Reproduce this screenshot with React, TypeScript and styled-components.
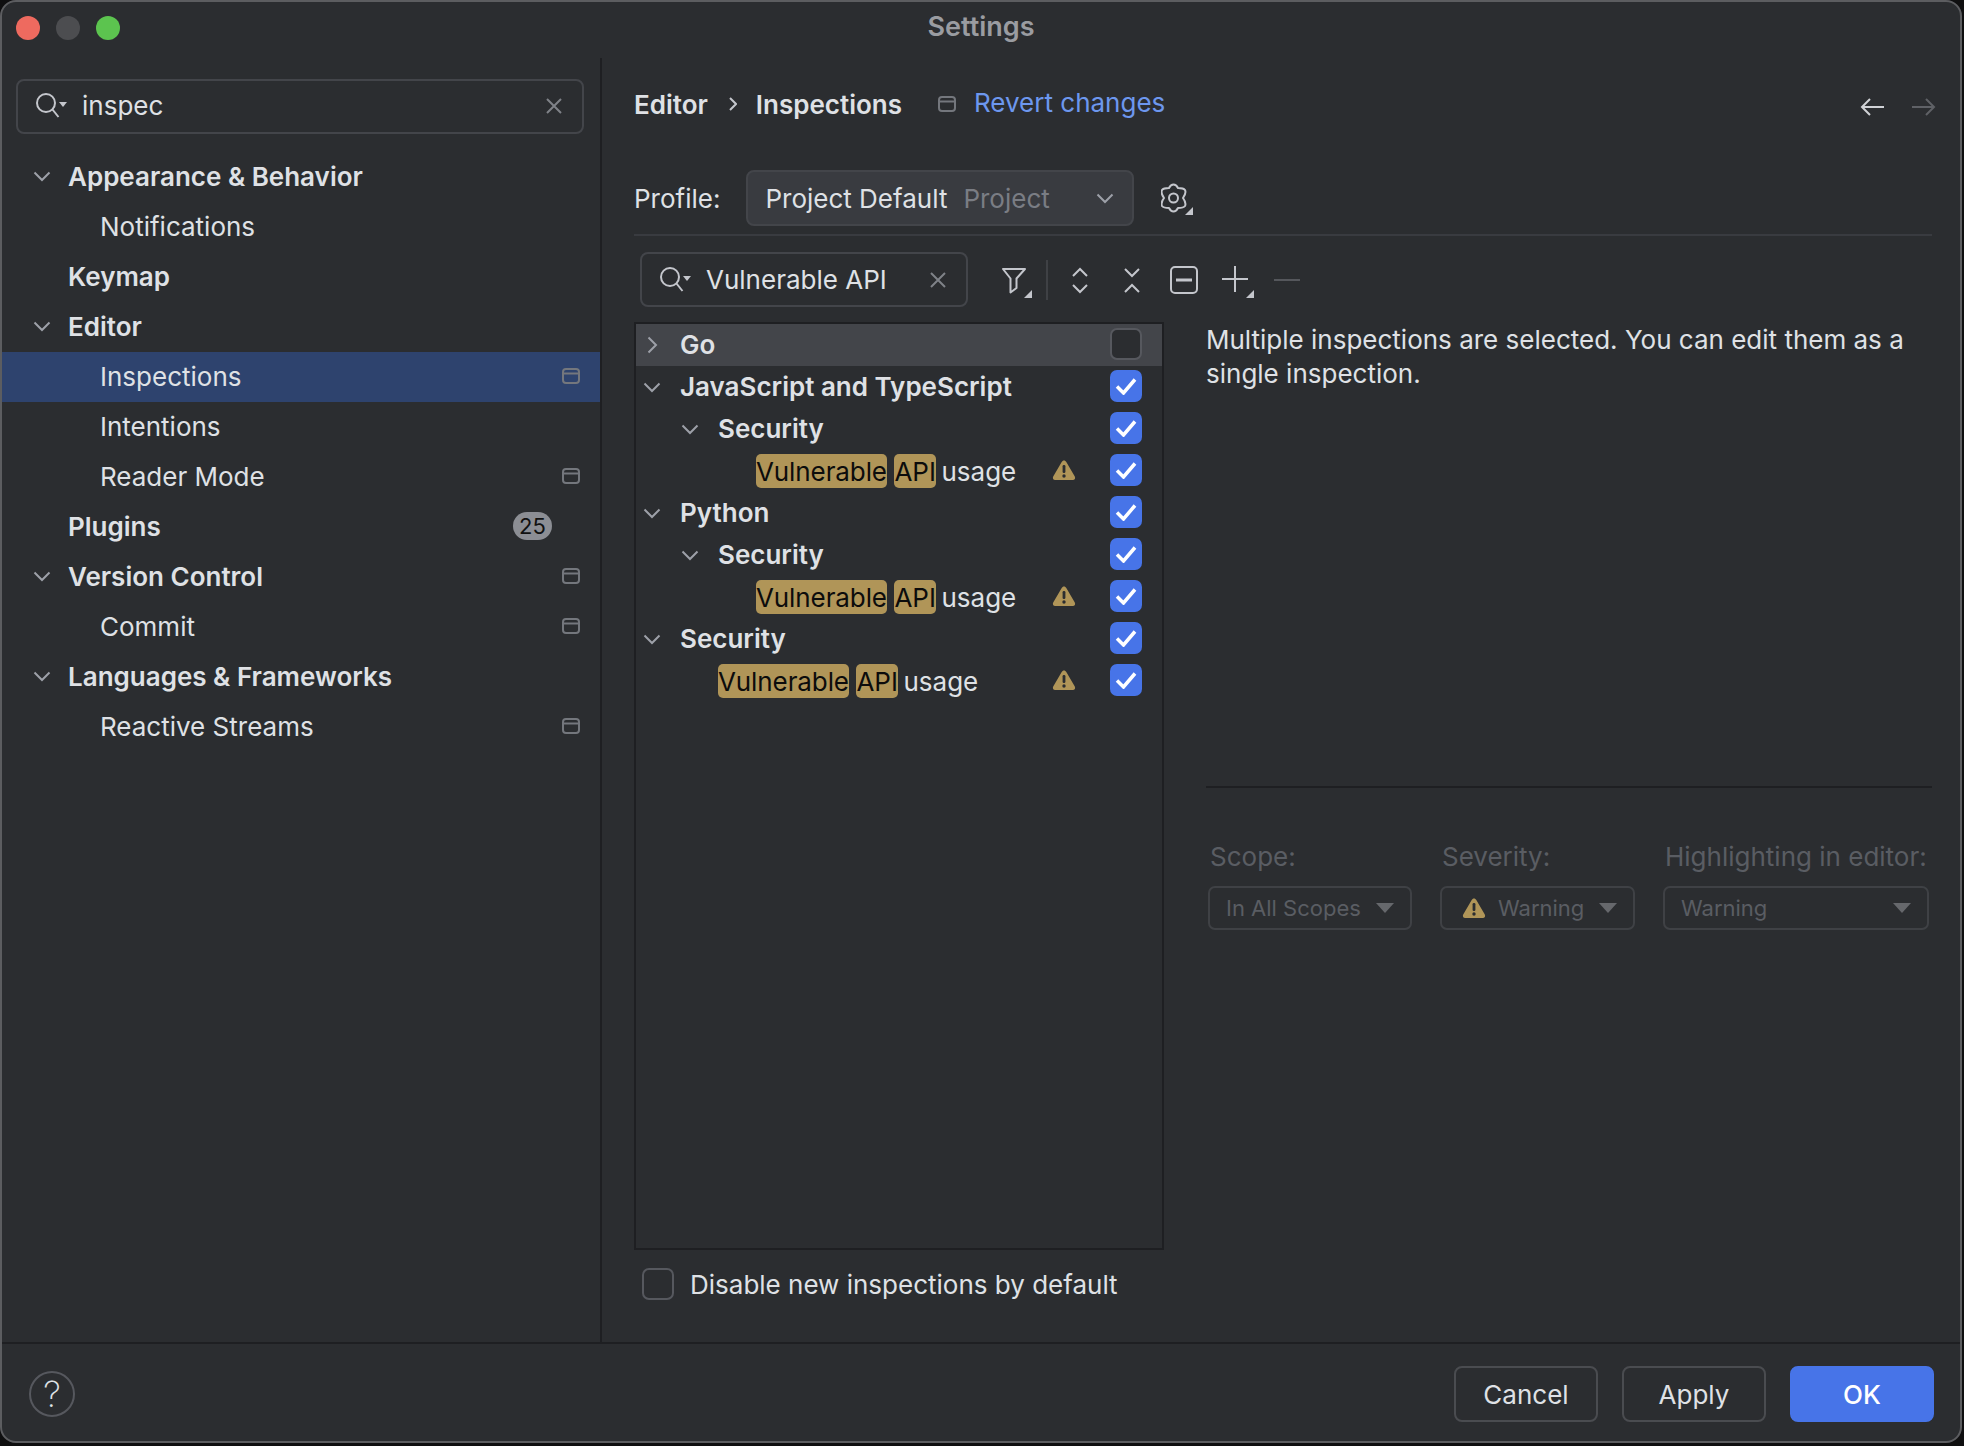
import React from 'react';
import styled, { createGlobalStyle } from 'styled-components';

const Global = createGlobalStyle`
    html, body { margin: 0; padding: 0; background: #0f0f10; }
    body { width: 1964px; height: 1446px; overflow: hidden; font-family: Inter, "Noto Sans", sans-serif; }
    * { box-sizing: border-box; }
`

const Window = styled.div`
    width: 1962px;
    height: 1443px;
    border: 2px solid #5c5d60;
    border-radius: 16px;
    background: #2b2d30;
    color: #dfe1e5;
    font-size: 26px;
    display: flex;
    flex-direction: column;
    overflow: hidden;
`

const TitleBar = styled.div`
    height: 56px;
    flex: none;
    position: relative;
    display: flex;
    align-items: center;
    justify-content: center;
    padding-bottom: 8px;
    font-size: 27px;
    font-weight: 600;
    color: #9a9ca1;
`

const Lights = styled.div`
    position: absolute;
    left: 14px;
    top: 14px;
    display: flex;
    gap: 16px;
`

const Light = styled.span<{ $color: string }>`
    width: 24px;
    height: 24px;
    border-radius: 50%;
    background: ${p => p.$color};
`

const Body = styled.div`
    flex: 1;
    display: flex;
    min-height: 0;
`

const Sidebar = styled.div`
    width: 600px;
    flex: none;
    border-right: 2px solid #1e1f22;
    padding-top: 21px;
`

const SearchBox = styled.div<{ $width: number }>`
    width: ${p => p.$width}px;
    height: 55px;
    border: 2px solid #43454a;
    border-radius: 8px;
    display: flex;
    align-items: center;
    gap: 15px;
    padding: 0 20px 0 18px;
    flex: none;
`

const SideSearch = styled(SearchBox)`
    margin: 0 0 18px 14px;
    padding-bottom: 2px;
`

const SearchText = styled.span`
    flex: 1;
`

const SideRow = styled.div<{ $indent: number; $selected?: boolean; $bold?: boolean }>`
    height: 50px;
    display: flex;
    align-items: center;
    gap: 16px;
    padding: 0 20px 2px ${p => p.$indent}px;
    background: ${p => (p.$selected ? '#2e436e' : 'transparent')};
    font-weight: ${p => (p.$bold ? 600 : 400)};
`

const ChevronSlot = styled.span`
    width: 20px;
    height: 20px;
    flex: none;
    display: flex;
    align-items: center;
    justify-content: center;
`

const Trailing = styled.span`
    margin-left: auto;
    display: flex;
    align-items: center;
`

const Badge = styled.span`
    margin-left: auto;
    margin-right: 28px;
    width: 39px;
    height: 28px;
    border-radius: 14px;
    background: #8c8e94;
    color: #111;
    font-size: 22px;
    font-weight: 400;
    display: flex;
    align-items: center;
    justify-content: center;
`

const Main = styled.div`
    flex: 1;
    min-width: 0;
    display: flex;
    flex-direction: column;
    padding: 27px 28px 0 32px;
`

const Header = styled.div`
    height: 38px;
    display: flex;
    align-items: center;
    flex: none;
`

const Crumb = styled.span`
    font-weight: 600;
`

const CrumbSep = styled.span`
    width: 48px;
    flex: none;
    display: flex;
    justify-content: center;
    padding-left: 2px;
`

const HeaderIcon = styled.span`
    margin-left: 36px;
    display: flex;
`

const RevertLink = styled.span`
    color: #6d97ee;
    margin: -4px 0 0 18px;
`

const HistoryNav = styled.div`
    margin: 0 -4px 0 auto;
    display: flex;
    gap: 28px;
    padding-top: 6px;
`

const ProfileRow = styled.div`
    margin-top: 47px;
    height: 56px;
    display: flex;
    align-items: center;
    flex: none;
`

const ProfileCombo = styled.div`
    width: 388px;
    height: 56px;
    margin-left: 26px;
    background: #393b40;
    border: 2px solid #43454a;
    border-radius: 8px;
    display: flex;
    align-items: center;
    padding: 0 18px 0 17px;
`

const Muted = styled.span`
    color: #7a7d84;
    margin-left: 16px;
`

const GearButton = styled.span`
    margin-left: 27px;
    display: flex;
`

const Rule = styled.div`
    height: 2px;
    flex: none;
    background: #393b40;
    margin-top: 8px;
`

const FilterRow = styled.div`
    margin: 16px 0 15px 6px;
    height: 55px;
    display: flex;
    align-items: center;
    flex: none;
`

const Tools = styled.div`
    display: flex;
    align-items: center;
    margin-left: 32px;
`

const ToolSlot = styled.span<{ $gap: number }>`
    display: flex;
    margin-left: ${p => p.$gap}px;
`

const ToolSep = styled.span`
    width: 2px;
    height: 40px;
    background: #3f4145;
    margin: 0 24px 0 14px;
`

const Content = styled.div`
    flex: none;
    display: flex;
    gap: 42px;
`

const Tree = styled.div`
    width: 530px;
    height: 928px;
    flex: none;
    border: 2px solid #1e1f22;
`

const TreeRow = styled.div<{ $indent: number; $selected?: boolean; $bold?: boolean }>`
    height: 42px;
    display: flex;
    align-items: center;
    gap: 18px;
    padding: 0 20px 0 ${p => p.$indent}px;
    background: ${p => (p.$selected ? '#43454a' : 'transparent')};
    font-weight: ${p => (p.$bold ? 600 : 400)};
`

const RowText = styled.span`
    padding-bottom: 2px;
`

const Match = styled.span<{ $pad: number; $gap: number; $tight?: boolean }>`
    height: 34px;
    padding: 0 ${p => p.$pad}px;
    margin-right: ${p => p.$gap}px;
    border-radius: 5px;
    background: #b09558;
    color: #0c0c0c;
    display: flex;
    align-items: center;
    letter-spacing: ${p => (p.$tight ? '-0.1px' : 'normal')};
`

const LeafLabel = styled.span`
    display: flex;
    align-items: center;
`

const WarnSlot = styled.span`
    margin: 0 16px 2px auto;
    display: flex;
`

const Check = styled.span<{ $on?: boolean }>`
    width: 32px;
    height: 32px;
    flex: none;
    border-radius: 7px;
    background: ${p => (p.$on ? '#4774e8' : '#2b2d30')};
    border: ${p => (p.$on ? 'none' : '2px solid #56585e')};
    display: flex;
    align-items: center;
    justify-content: center;
`

const TreeCheck = styled(Check)`
    margin-bottom: 2px;
`

const PushedCheck = styled(TreeCheck)`
    margin-left: auto;
`

const Details = styled.div`
    flex: 1;
    min-width: 0;
`

const Description = styled.div`
    height: 466px;
    line-height: 34px;
    padding-top: 1px;
    border-bottom: 2px solid #1e1f22;
`

const Options = styled.div`
    display: flex;
    gap: 28px;
    padding: 52px 0 0 2px;
`

const OptionLabel = styled.div`
    height: 34px;
    line-height: 34px;
    padding-left: 2px;
    margin-bottom: 12px;
    color: #5a5d63;
    white-space: nowrap;
`

const DisabledCombo = styled.div<{ $width: number; $pad?: number }>`
    width: ${p => p.$width}px;
    height: 44px;
    border: 2px solid #3f4145;
    border-radius: 7px;
    padding: 0 16px 0 ${p => p.$pad ?? 16}px;
    display: flex;
    align-items: center;
    gap: 12px;
    font-size: 22px;
    color: #5a5d63;
    white-space: nowrap;
`

const ComboArrow = styled.span`
    margin-left: auto;
    width: 0;
    height: 0;
    border-left: 9px solid transparent;
    border-right: 9px solid transparent;
    border-top: 10px solid #66686c;
`

const BottomOption = styled.div`
    margin: 18px 0 0 8px;
    display: flex;
    align-items: center;
    gap: 16px;
`

const Footer = styled.div`
    height: 99px;
    flex: none;
    border-top: 2px solid #1e1f22;
    display: flex;
    align-items: center;
    padding: 3px 26px 0 27px;
    gap: 24px;
`

const HelpButton = styled.span`
    width: 46px;
    height: 46px;
    border: 2px solid #56585e;
    border-radius: 50%;
    margin-right: auto;
    display: flex;
    align-items: center;
    justify-content: center;
    font-size: 36px;
    font-weight: 200;
    color: #dfe1e5;
`

const Button = styled.span<{ $primary?: boolean }>`
    width: 144px;
    height: 56px;
    border-radius: 8px;
    border: 2px solid ${p => (p.$primary ? '#4774e8' : '#4a4c50')};
    background: ${p => (p.$primary ? '#4774e8' : 'transparent')};
    color: ${p => (p.$primary ? '#fff' : '#dfe1e5')};
    display: flex;
    align-items: center;
    justify-content: center;
    font-weight: ${p => (p.$primary ? 500 : 400)};
`

const stroke = '#9da0a8'
const light = '#c4c6cc'

const Down = () => (
    <svg width="18" height="11" viewBox="0 0 18 11" fill="none"><path d="M1.5 1.5L9 9l7.5-7.5" stroke={stroke} strokeWidth="2" /></svg>
)
const Right = () => (
    <svg width="11" height="18" viewBox="0 0 11 18" fill="none"><path d="M1.5 1.5L9 9l-7.5 7.5" stroke={stroke} strokeWidth="2" /></svg>
)
const Lens = () => (
    <svg width="31" height="26" viewBox="0 0 31 26" fill="none">
        <circle cx="10" cy="10" r="9" stroke={light} strokeWidth="2" />
        <path d="M16.500 16.500L22.500 24" stroke={light} strokeWidth="2" />
        <path d="M23 9h8l-4 5z" fill={light} />
    </svg>
)
const Clear = () => (
    <svg width="16" height="16" viewBox="0 0 16 16" fill="none"><path d="M1 1l14 14M15 1L1 15" stroke="#7f8288" strokeWidth="2" /></svg>
)
const ProjectIcon = () => (
    <svg width="18" height="16" viewBox="0 0 18 16" fill="none">
        <rect x="1" y="1" width="16" height="14" rx="3" stroke="#74777d" strokeWidth="2" />
        <path d="M1 5.500h16" stroke="#74777d" strokeWidth="2" />
    </svg>
)
const Gear = () => (
    <svg width="34" height="34" viewBox="0 0 34 34" fill="none">
        <path
            d="M8 7C9.500 4 10.500 3.500 12.500 3.500C14.500 3.500 15.500 4 17 7C20 7 22.500 7 24 9C25 11 24.500 13.500 22 17C24.500 20.500 25 23 24 25C22.500 27 20 27 17 27C15.500 30 14.500 30.500 12.500 30.500C10.500 30.500 9.500 30 8 27C5 27 2.500 27 1 25C0 23 .5 20.500 3 17C.5 13.500 0 11 1 9C2.500 7 5 7 8 7Z"
            stroke={light}
            strokeWidth="2"
            strokeLinejoin="round"
        />
        <circle cx="12.500" cy="17" r="4.500" stroke={light} strokeWidth="2" />
        <path d="M24 34l8-8v8z" fill={light} />
    </svg>
)
const Funnel = () => (
    <svg width="32" height="36" viewBox="0 0 32 36" fill="none">
        <path d="M3 7h22L16.500 16.500v9.500l-6 4.500V16.500z" stroke={light} strokeWidth="2" strokeLinejoin="round" />
        <path d="M24 36l8-8v8z" fill={light} />
    </svg>
)
const ExpandAll = () => (
    <svg width="16" height="36" viewBox="0 0 16 36" fill="none"><path d="M1 14l7-7 7 7M1 23l7 7 7-7" stroke={light} strokeWidth="2" /></svg>
)
const CollapseAll = () => (
    <svg width="16" height="36" viewBox="0 0 16 36" fill="none"><path d="M1 7l7 7 7-7M1 30l7-7 7 7" stroke={light} strokeWidth="2" /></svg>
)
const MinusBox = () => (
    <svg width="28" height="28" viewBox="0 0 28 28" fill="none">
        <rect x="1" y="1" width="26" height="26" rx="4" stroke={light} strokeWidth="2" />
        <path d="M6 14h16" stroke={light} strokeWidth="3" />
    </svg>
)
const Plus = () => (
    <svg width="32" height="36" viewBox="0 0 32 36" fill="none">
        <path d="M13 4v26M0 17h26" stroke={light} strokeWidth="2" />
        <path d="M24 36l8-8v8z" fill={light} />
    </svg>
)
const Minus = () => (
    <svg width="26" height="4" viewBox="0 0 26 4" fill="none"><path d="M0 2h26" stroke="#55575c" strokeWidth="2" /></svg>
)
const Arrow = ({ dir, color }: { dir: 'left' | 'right'; color: string }) => (
    <svg width="24" height="20" viewBox="0 0 24 20" fill="none">
        <path d={dir === 'left' ? 'M24 10H2M10 2l-8 8 8 8' : 'M0 10h22M14 2l8 8-8 8'} stroke={color} strokeWidth="2" />
    </svg>
)
const Warn = () => (
    <svg width="24" height="22" viewBox="0 0 24 22">
        <path d="M12 1.500c1 0 1.800.6 2.300 1.500l8.500 14.500c.9 1.700-.1 3.500-2 3.500H3.200c-1.900 0-2.900-1.800-2-3.500L9.700 3c.5-.9 1.300-1.500 2.300-1.500z" fill="#b09558" />
        <rect x="10.600" y="6" width="2.800" height="8" rx="1.200" fill="#2b2d30" />
        <circle cx="12" cy="17" r="1.700" fill="#2b2d30" />
    </svg>
)
const Tick = () => (
    <svg width="22" height="18" viewBox="0 0 22 18" fill="none"><path d="M2 9.500L8.500 16 20 2.500" stroke="#fff" strokeWidth="3.500" /></svg>
)

const sideItems: { label: string; bold?: boolean; open?: boolean; selected?: boolean; project?: boolean; badge?: string }[] = [
    { label: 'Appearance & Behavior', bold: true, open: true },
    { label: 'Notifications' },
    { label: 'Keymap', bold: true },
    { label: 'Editor', bold: true, open: true },
    { label: 'Inspections', selected: true, project: true },
    { label: 'Intentions' },
    { label: 'Reader Mode', project: true },
    { label: 'Plugins', bold: true, badge: '25' },
    { label: 'Version Control', bold: true, open: true, project: true },
    { label: 'Commit', project: true },
    { label: 'Languages & Frameworks', bold: true, open: true },
    { label: 'Reactive Streams', project: true },
]

const treeItems: { label?: string; level: number; leaf?: boolean; closed?: boolean; off?: boolean }[] = [
    { label: 'Go', level: 0, closed: true, off: true },
    { label: 'JavaScript and TypeScript', level: 0 },
    { label: 'Security', level: 1 },
    { level: 2, leaf: true },
    { label: 'Python', level: 0 },
    { label: 'Security', level: 1 },
    { level: 2, leaf: true },
    { label: 'Security', level: 0 },
    { level: 1, leaf: true },
]

const App = () => {
    return (
        <>
            <Global />
            <Window>
                <TitleBar>
                    <Lights>
                        <Light $color="#ee6a5f" />
                        <Light $color="#4c4d50" />
                        <Light $color="#5cc44f" />
                    </Lights>
                    Settings
                </TitleBar>
                <Body>
                    <Sidebar>
                        <SideSearch $width={568}>
                            <Lens />
                            <SearchText>inspec</SearchText>
                            <Clear />
                        </SideSearch>
                        {sideItems.map(item => (
                            <SideRow
                                key={item.label}
                                $indent={item.bold ? 30 : 98}
                                $bold={item.bold}
                                $selected={item.selected}
                            >
                                {item.bold && <ChevronSlot>{item.open && <Down />}</ChevronSlot>}
                                {item.label}
                                {item.badge && <Badge>{item.badge}</Badge>}
                                {item.project && <Trailing><ProjectIcon /></Trailing>}
                            </SideRow>
                        ))}
                    </Sidebar>
                    <Main>
                        <Header>
                            <Crumb>Editor</Crumb>
                            <CrumbSep>
                                <svg width="8" height="14" viewBox="0 0 8 14" fill="none"><path d="M1 1l6 6-6 6" stroke={light} strokeWidth="2" /></svg>
                            </CrumbSep>
                            <Crumb>Inspections</Crumb>
                            <HeaderIcon><ProjectIcon /></HeaderIcon>
                            <RevertLink>Revert changes</RevertLink>
                            <HistoryNav>
                                <Arrow dir="left" color="#d0d2d6" />
                                <Arrow dir="right" color="#5f6166" />
                            </HistoryNav>
                        </Header>
                        <ProfileRow>
                            Profile:
                            <ProfileCombo>
                                Project Default
                                <Muted>Project</Muted>
                                <Trailing><Down /></Trailing>
                            </ProfileCombo>
                            <GearButton><Gear /></GearButton>
                        </ProfileRow>
                        <Rule />
                        <FilterRow>
                            <SearchBox $width={328}>
                                <Lens />
                                <SearchText>Vulnerable API</SearchText>
                                <Clear />
                            </SearchBox>
                            <Tools>
                                <Funnel />
                                <ToolSep />
                                <ExpandAll />
                                <ToolSlot $gap={36}><CollapseAll /></ToolSlot>
                                <ToolSlot $gap={30}><MinusBox /></ToolSlot>
                                <ToolSlot $gap={24}><Plus /></ToolSlot>
                                <ToolSlot $gap={20}><Minus /></ToolSlot>
                            </Tools>
                        </FilterRow>
                        <Content>
                            <Tree>
                                {treeItems.map((item, i) => (
                                    <TreeRow
                                        key={i}
                                        $indent={item.leaf ? 120 - (2 - item.level) * 38 : item.level === 0 ? 6 : 44}
                                        $bold={!item.leaf}
                                        $selected={i === 0}
                                    >
                                        {!item.leaf && (
                                            <ChevronSlot>{item.closed ? <Right /> : <Down />}</ChevronSlot>
                                        )}
                                        {item.leaf ? (
                                            <>
                                                <LeafLabel>
                                                    <Match $pad={0} $gap={7} $tight>Vulnerable</Match>
                                                    <Match $pad={0.5} $gap={5}>API</Match>
                                                    usage
                                                </LeafLabel>
                                                <WarnSlot><Warn /></WarnSlot>
                                                <TreeCheck $on><Tick /></TreeCheck>
                                            </>
                                        ) : (
                                            <>
                                                <RowText>{item.label}</RowText>
                                                <PushedCheck $on={!item.off}>{!item.off && <Tick />}</PushedCheck>
                                            </>
                                        )}
                                    </TreeRow>
                                ))}
                            </Tree>
                            <Details>
                                <Description>
                                    Multiple inspections are selected. You can edit them as a single inspection.
                                </Description>
                                <Options>
                                    <div>
                                        <OptionLabel>Scope:</OptionLabel>
                                        <DisabledCombo $width={204}>In All Scopes<ComboArrow /></DisabledCombo>
                                    </div>
                                    <div>
                                        <OptionLabel>Severity:</OptionLabel>
                                        <DisabledCombo $width={195} $pad={20}><Warn />Warning<ComboArrow /></DisabledCombo>
                                    </div>
                                    <div>
                                        <OptionLabel>Highlighting in editor:</OptionLabel>
                                        <DisabledCombo $width={266}>Warning<ComboArrow /></DisabledCombo>
                                    </div>
                                </Options>
                            </Details>
                        </Content>
                        <BottomOption>
                            <Check />
                            Disable new inspections by default
                        </BottomOption>
                    </Main>
                </Body>
                <Footer>
                    <HelpButton>?</HelpButton>
                    <Button>Cancel</Button>
                    <Button>Apply</Button>
                    <Button $primary>OK</Button>
                </Footer>
            </Window>
        </>
    )
}

export default App;
